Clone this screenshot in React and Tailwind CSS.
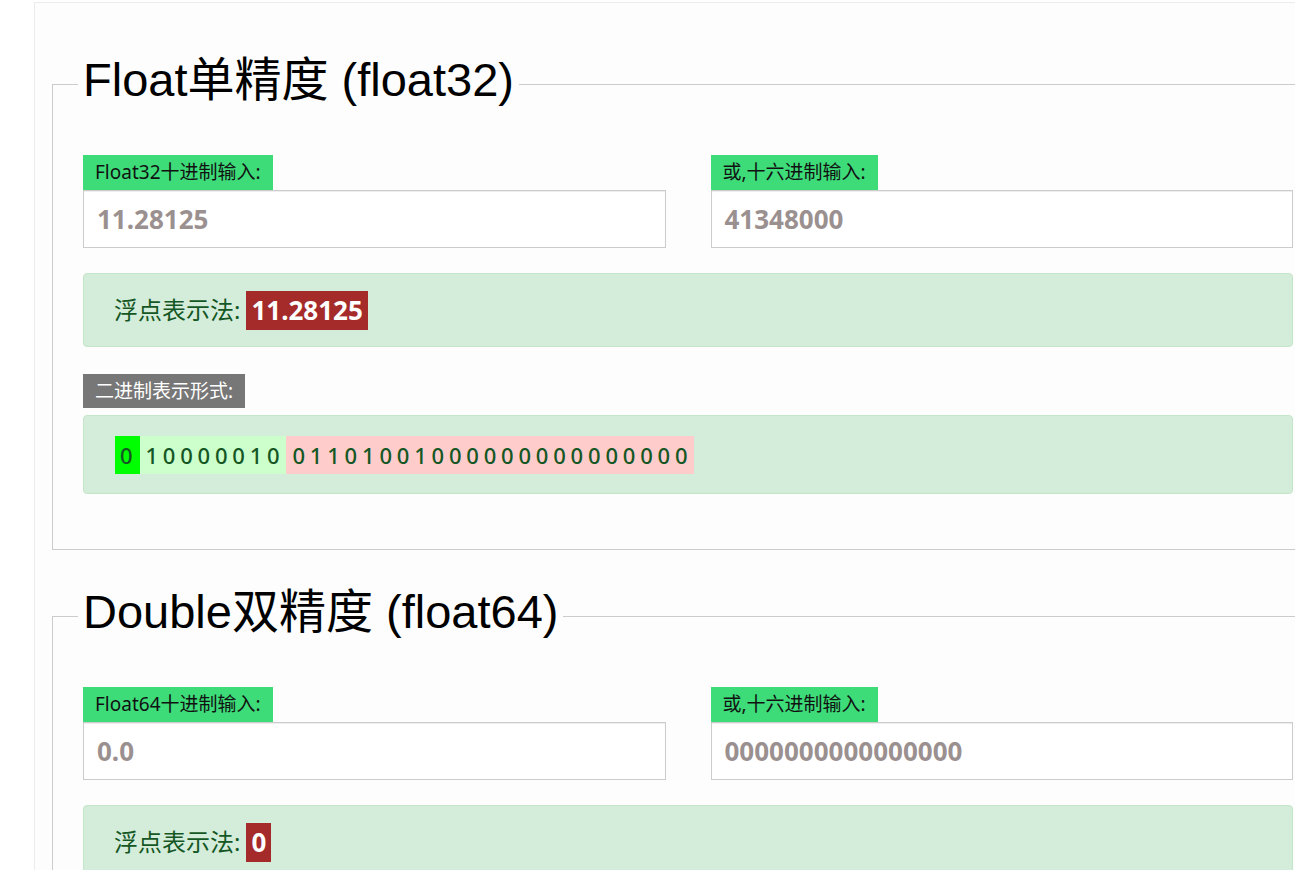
import React from "react";

const cjk = { fontFamily: '"Noto Sans", "Noto Sans CJK SC", sans-serif' };
const legendFont = { fontFamily: '"Liberation Sans", Arial, "Noto Sans CJK SC", sans-serif' };

function Label({ children, gray }) {
  return (
    <div
      className={`inline-block px-[12px] text-[19px] ${gray ? "h-[34px] bg-[#777777] leading-[34px] text-white" : "h-[35px] bg-[#3ddc79] leading-[35px] text-[#111]"}`}
      style={cjk}
    >
      {children}
    </div>
  );
}

function Input({ label, value }) {
  return (
    <div className="flex flex-col">
      <div>
        <Label>{label}</Label>
      </div>
      <div
        className="h-[58px] border border-[#cccccc] bg-white pl-[13px] text-[26px] font-bold leading-[56px] text-[#9b9090] shadow-[inset_0_1px_1px_rgba(0,0,0,0.075)]"
        style={cjk}
      >
        {value}
      </div>
    </div>
  );
}

function Section({ title, decLabel, dec, hex, rep, bits }) {
  return (
    <fieldset className="border border-[#cccccc] pl-[30px] pr-[30px] w-[1272px]">
      <legend
        className="ml-[-5px] px-[5px] pb-[8px] text-[47px] leading-[56px] text-black"
        style={legendFont}
      >
        {title}
      </legend>
      <div className="mt-[39px] grid grid-cols-2 gap-[45px]">
        <Input label={decLabel} value={dec} />
        <Input label="或,十六进制输入:" value={hex} />
      </div>
      <div
        className="mt-[25px] flex h-[74px] items-center rounded-[4px] border border-[#c3e6cb] bg-[#d4edda] pl-[30px] text-[24px] text-[#155724]"
        style={cjk}
      >
        <span>浮点表示法:</span>
        <span className="ml-[6px] bg-[#a52a2a] px-[5px] text-[26px] font-bold leading-[39px] text-white">
          {rep}
        </span>
      </div>
      {bits && (
        <>
          <div className="mt-[27px]">
            <Label gray>二进制表示形式:</Label>
          </div>
          <div
            className="mt-[7px] mb-[55px] flex h-[79px] items-center rounded-[4px] border border-[#c3e6cb] bg-[#d4edda] pl-[31px] text-[22px] font-medium tracking-[4.8px] text-[#155724]"
            style={cjk}
          >
            <span className="bg-[#00ff00] pl-[5px] pr-[3px] leading-[38px]">{bits[0]}</span>
            <span className="bg-[#ccffcc] pl-[5px] pr-[2px] leading-[38px]">{bits[1]}</span>
            <span className="bg-[#ffcccc] pl-[6px] pr-[2px] leading-[38px]">{bits[2]}</span>
          </div>
        </>
      )}
    </fieldset>
  );
}

export default function App() {
  return (
    <div className="h-[870px] w-[1295px] overflow-hidden bg-white">
      <div className="ml-[34px] mt-[2px] h-[900px] border-l border-t border-[#ececec] bg-[#fdfdfd] pl-[17px] pt-[49px]">
        <Section
          title="Float单精度 (float32)"
          decLabel="Float32十进制输入:"
          dec="11.28125"
          hex="41348000"
          rep="11.28125"
          bits={["0", "10000010", "01101001000000000000000"]}
        />
        <div className="mt-[34px]">
          <Section
            title="Double双精度 (float64)"
            decLabel="Float64十进制输入:"
            dec="0.0"
            hex="0000000000000000"
            rep="0"
          />
        </div>
      </div>
    </div>
  );
}
